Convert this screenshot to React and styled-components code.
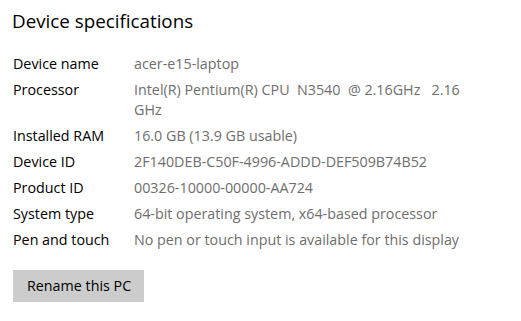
import React from "react";
import styled, { createGlobalStyle } from "styled-components";

const Global = createGlobalStyle`
  html, body { margin: 0; padding: 0; background: #ffffff; }
  body { font-family: "Open Sans", "Noto Sans", sans-serif; -webkit-font-smoothing: antialiased; }
`;

const Page = styled.div`
  width: 521px;
  height: 321px;
  box-sizing: border-box;
  padding: 8px 0 0 13px;
  background: #ffffff;
  overflow: hidden;
`;

const Title = styled.h2`
  margin: 0 0 20px -1px;
  font-size: 18.8px;
  line-height: 26px;
  font-weight: 400;
  color: #000000;
`;

const SpecList = styled.dl`
  margin: 0;
  display: grid;
  grid-template-columns: 121px 335px;
  row-gap: 6px;
  font-size: 14.3px;
  line-height: 20px;
`;

const Label = styled.dt`
  margin: 0;
  color: #000000;
`;

const Value = styled.dd`
  margin: 0;
  color: #6e6e6e;
  white-space: pre-wrap;
`;

const Button = styled.button`
  margin: 20px 0 0 0;
  height: 32px;
  padding: 0 13px 0 14px;
  border: none;
  background: #cccccc;
  color: #000000;
  font-family: "Open Sans", "Noto Sans", sans-serif;
  font-size: 14.3px;
  line-height: 20px;
  cursor: pointer;
`;

const specs = [
  ["Device name", "acer-e15-laptop"],
  ["Processor", "Intel(R) Pentium(R) CPU  N3540  @ 2.16GHz   2.16 GHz"],
  ["Installed RAM", "16.0 GB (13.9 GB usable)"],
  ["Device ID", "2F140DEB-C50F-4996-ADDD-DEF509B74B52"],
  ["Product ID", "00326-10000-00000-AA724"],
  ["System type", "64-bit operating system, x64-based processor"],
  ["Pen and touch", "No pen or touch input is available for this display"],
];

export default function App() {
  return (
    <>
      <Global />
      <Page>
        <Title>Device specifications</Title>
        <SpecList>
          {specs.map(([label, value]) => (
            <React.Fragment key={label}>
              <Label>{label}</Label>
              <Value>{value}</Value>
            </React.Fragment>
          ))}
        </SpecList>
        <Button>Rename this PC</Button>
      </Page>
    </>
  );
}
